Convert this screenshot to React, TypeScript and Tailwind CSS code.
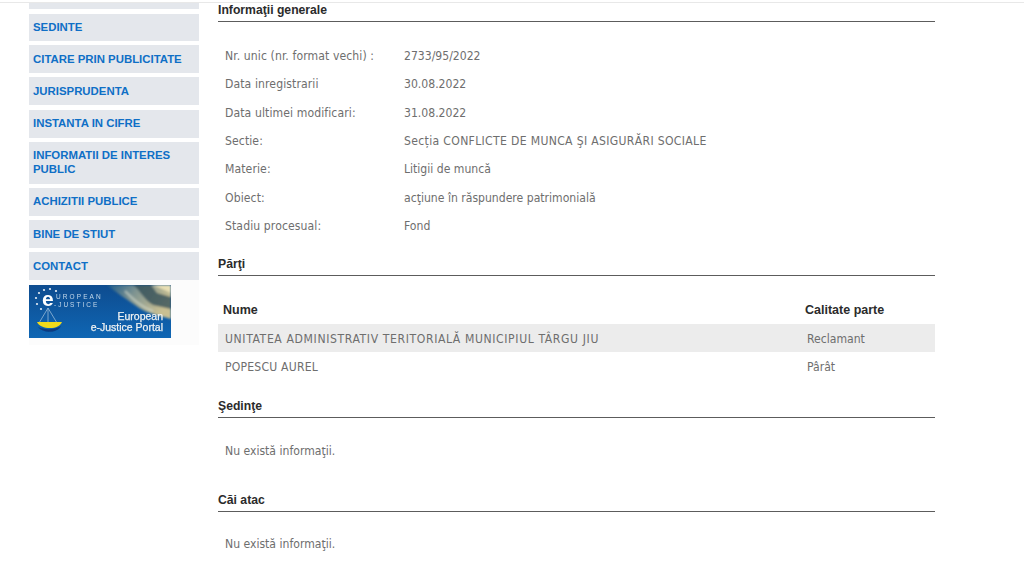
const MENU: { label: string; h: string }[] = [
  { label: "SEDINTE", h: "h-[27px]" },
  { label: "CITARE PRIN PUBLICITATE", h: "h-[28px]" },
  { label: "JURISPRUDENTA", h: "h-[28px]" },
  { label: "INSTANTA IN CIFRE", h: "h-[28px]" },
  { label: "INFORMATII DE INTERES PUBLIC", h: "h-[42px]" },
  { label: "ACHIZITII PUBLICE", h: "h-[28px]" },
  { label: "BINE DE STIUT", h: "h-[28px]" },
  { label: "CONTACT", h: "h-[28px]" },
];

const GENERAL: { label: string; value: string; valueCls?: string }[] = [
  { label: "Nr. unic (nr. format vechi) :", value: "2733/95/2022" },
  { label: "Data inregistrarii", value: "30.08.2022" },
  { label: "Data ultimei modificari:", value: "31.08.2022" },
  { label: "Sectie:", value: "Secția CONFLICTE DE MUNCA ŞI ASIGURĂRI SOCIALE", valueCls: "tracking-[0.33px]" },
  { label: "Materie:", value: "Litigii de muncă" },
  { label: "Obiect:", value: "acţiune în răspundere patrimonială" },
  { label: "Stadiu procesual:", value: "Fond" },
];

function EJusticeLogo() {
  return (
    <svg width="142" height="53" viewBox="0 0 142 53" className="block" aria-label="European e-Justice Portal">
      <defs>
        <linearGradient id="sky" x1="0" y1="0" x2="0" y2="1">
          <stop offset="0" stopColor="#0e4c8f" />
          <stop offset="1" stopColor="#0f66b4" />
        </linearGradient>
        <linearGradient id="statue" x1="0" y1="0" x2="1" y2="0.4">
          <stop offset="0" stopColor="#1d5a88" />
          <stop offset="0.45" stopColor="#7f9491" />
          <stop offset="1" stopColor="#c9bf92" />
        </linearGradient>
        <filter id="soft"><feGaussianBlur stdDeviation="1.2" /></filter>
        <filter id="softer"><feGaussianBlur stdDeviation="0.3" /></filter>
      </defs>
      <rect width="142" height="53" fill="url(#sky)" />
      <g filter="url(#soft)">
        <path d="M78 0H142V34C128 30 116 28 106 20C96 13 88 8 78 0Z" fill="url(#statue)" />
        <path d="M104 0C112 6 114 14 124 20L142 24V12L128 8L122 0Z" fill="#2c4a56" opacity="0.75" />
        <path d="M124 0L142 8V0Z" fill="#e8dfb4" />
        <path d="M96 6C104 14 112 22 124 26" stroke="#d9e0d0" strokeWidth="2" fill="none" opacity="0.6" />
      </g>
      <g filter="url(#softer)">
        <g fill="#e8eef5">
          {[[15, 5], [21, 4], [10, 8], [27, 6], [7, 13], [8, 19], [12, 24]].map(([cx, cy]) => (
            <circle key={`${cx}-${cy}`} cx={cx} cy={cy} r="1.1" />
          ))}
        </g>
        <text x="13" y="21" fontSize="21" fontWeight="700" fontFamily="Liberation Sans, sans-serif" fill="#fff">e</text>
        <text x="27" y="14" fontSize="6.5" letterSpacing="2.1" fontFamily="Liberation Sans, sans-serif" fill="#c4d8ea">UROPEAN</text>
        <text x="25" y="21.5" fontSize="6.5" letterSpacing="2" fontFamily="Liberation Sans, sans-serif" fill="#c4d8ea">-JUSTICE</text>
        <path d="M19 23L10 38M19 23L28 38M19 23L19 38" stroke="#a9c6df" strokeWidth="0.7" fill="none" />
        <path d="M8 37H33C31 41 27 43 21 43C15 43 10 41 8 37Z" fill="#f0d91e" />
        <path d="M9 42C15 45 26 45 32 41C29 48 14 49 9 42Z" fill="#0a3a80" />
      </g>
      <g filter="url(#softer)">
        <text x="134" y="35" textAnchor="end" fontSize="10.5" stroke="#eef1f2" strokeWidth="0.25" fontFamily="Liberation Sans, sans-serif" fill="#eef1f2">European</text>
        <text x="134" y="46" textAnchor="end" fontSize="10.5" stroke="#eef1f2" strokeWidth="0.25" fontFamily="Liberation Sans, sans-serif" fill="#eef1f2">e-Justice Portal</text>
      </g>
    </svg>
  );
}

function SectionTitle({ title, className }: { title: string; className: string }) {
  return (
    <h2 className={`border-b border-[#5c5c5c] pb-[4px] text-[12.2px] leading-[14px] font-bold text-[#2b2b2b] font-['Liberation_Sans',sans-serif] ${className}`}>
      {title}
    </h2>
  );
}

export default function App() {
  return (
    <div className="h-[574px] w-[1024px] overflow-hidden bg-white font-['DejaVu_Sans_Condensed','DejaVu_Sans',sans-serif] text-[12.1px] text-[#6e6e6e]">
      <div className="mt-[2px] flex gap-[19px] border-t border-[#e8e8e8] pl-[29px]">
        <aside className="w-[170px] shrink-0">
          <div className="h-[6px] bg-[#e4e7ec]" />
          <nav className="mt-[5px] flex flex-col gap-[4.2px]">
            {MENU.map((item) => (
              <a
                key={item.label}
                className={`flex items-center bg-[#e4e7ec] pb-[1px] pl-[4px] pr-[10px] text-[11.4px] leading-[14px] font-bold text-[#0f6fc6] font-['Liberation_Sans',sans-serif] ${item.h}`}
              >
                {item.label}
              </a>
            ))}
          </nav>
          <div className="h-[65px] bg-[#fcfcfc] pt-[5px]">
            <EJusticeLogo />
          </div>
        </aside>

        <main className="w-[717px] shrink-0">
          <SectionTitle title="Informaţii generale" className="" />
          <dl className="mt-[20px] flex flex-col pb-[1px] pl-[7px]">
            {GENERAL.map((row) => (
              <div key={row.label} className="flex h-[28.33px] items-center">
                <dt className="w-[179px] shrink-0 tracking-[0.1px]">{row.label}</dt>
                <dd className={row.valueCls}>{row.value}</dd>
              </div>
            ))}
          </dl>

          <SectionTitle title="Părţi" className="mt-[16px]" />
          <table className="mt-[19px] w-full border-collapse">
            <thead>
              <tr className="h-[29px] text-left text-[12.5px] font-bold text-[#2b2b2b] font-['Liberation_Sans',sans-serif]">
                <th className="pl-[5px] pt-[1px] font-bold">Nume</th>
                <th className="w-[130px] pt-[1px] font-bold">Calitate parte</th>
              </tr>
            </thead>
            <tbody>
              <tr className="h-[28px] bg-[#ececec]">
                <td className="pl-[7px] pt-[2px] tracking-[0.62px]">UNITATEA ADMINISTRATIV TERITORIALĂ MUNICIPIUL TÂRGU JIU</td>
                <td className="pl-[2px] pt-[2px]">Reclamant</td>
              </tr>
              <tr className="h-[29px]">
                <td className="pl-[7px] pt-[1px] tracking-[0.2px]">POPESCU AUREL</td>
                <td className="pl-[2px] pt-[1px]">Pârât</td>
              </tr>
            </tbody>
          </table>

          <SectionTitle title="Şedinţe" className="mt-[18px]" />
          <p className="mt-[25px] pl-[7px] leading-[17px]">Nu există informaţii.</p>

          <SectionTitle title="Căi atac" className="mt-[33px]" />
          <p className="mt-[24px] pl-[7px] leading-[17px]">Nu există informaţii.</p>
        </main>
      </div>
    </div>
  );
}
